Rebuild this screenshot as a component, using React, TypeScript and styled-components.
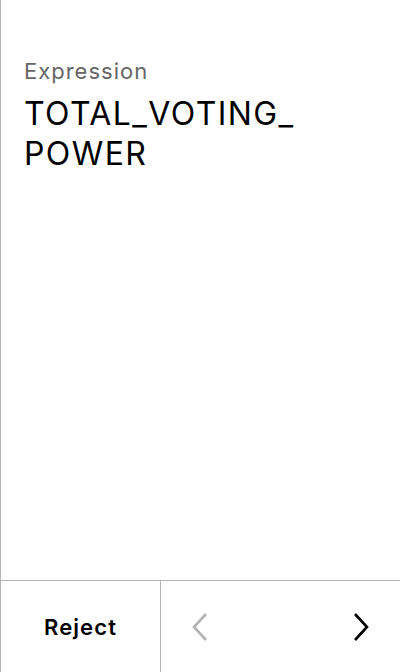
import React from "react";
import styled, { createGlobalStyle } from "styled-components";

const GlobalStyle = createGlobalStyle`
  html, body {
    margin: 0;
    padding: 0;
    background: #ffffff;
  }

  body {
    font-family: Inter, "Noto Sans", "Liberation Sans", sans-serif;
    color: #000000;
  }
`;

const Screen = styled.div`
  height: 672px;
  display: flex;
  flex-direction: column;
  border-left: 1px solid #b4b4b4;
  box-sizing: border-box;
`;

const Content = styled.main`
  flex: 1;
  padding: 56px 24px 0 23px;
`;

const Label = styled.div`
  font-size: 22px;
  line-height: 30px;
  letter-spacing: 1px;
  color: #666666;
`;

const Value = styled.div`
  margin-top: 8px;
  font-size: 32px;
  line-height: 40px;
  letter-spacing: 1.4px;
  color: #000000;
`;

const Footer = styled.footer`
  height: 91px;
  display: grid;
  grid-template-columns: 160px 1fr;
  border-top: 1px solid #b4b4b4;
`;

const RejectButton = styled.button`
  border: none;
  border-right: 1px solid #b4b4b4;
  background: transparent;
  font-family: inherit;
  font-size: 22px;
  font-weight: 600;
  letter-spacing: 1.1px;
  color: #000000;
  padding: 0;
`;

const Nav = styled.div`
  display: flex;
  align-items: center;
  justify-content: space-between;
  padding: 0 31px 0 31px;
`;

const Arrow = styled.button<{ $disabled?: boolean }>`
  border: none;
  background: transparent;
  padding: 0;
  display: flex;
  color: ${(p) => (p.$disabled ? "#b4b4b4" : "#000000")};
`;

const Chevron = ({ dir }: { dir: "left" | "right" }) => (
  <svg width="16" height="28" viewBox="0 0 16 28" fill="none">
    <path
      d={dir === "left" ? "M14 1 L2 14 L14 27" : "M2 1 L14 14 L2 27"}
      stroke="currentColor"
      strokeWidth="2.6"
    />
  </svg>
);

const App = () => {
  return (
    <>
      <GlobalStyle />
      <Screen>
        <Content>
          <Label>Expression</Label>
          <Value>
            TOTAL_<wbr />VOTING_<wbr />POWER
          </Value>
        </Content>
        <Footer>
          <RejectButton>Reject</RejectButton>
          <Nav>
            <Arrow $disabled>
              <Chevron dir="left" />
            </Arrow>
            <Arrow>
              <Chevron dir="right" />
            </Arrow>
          </Nav>
        </Footer>
      </Screen>
    </>
  );
};

export default App;
